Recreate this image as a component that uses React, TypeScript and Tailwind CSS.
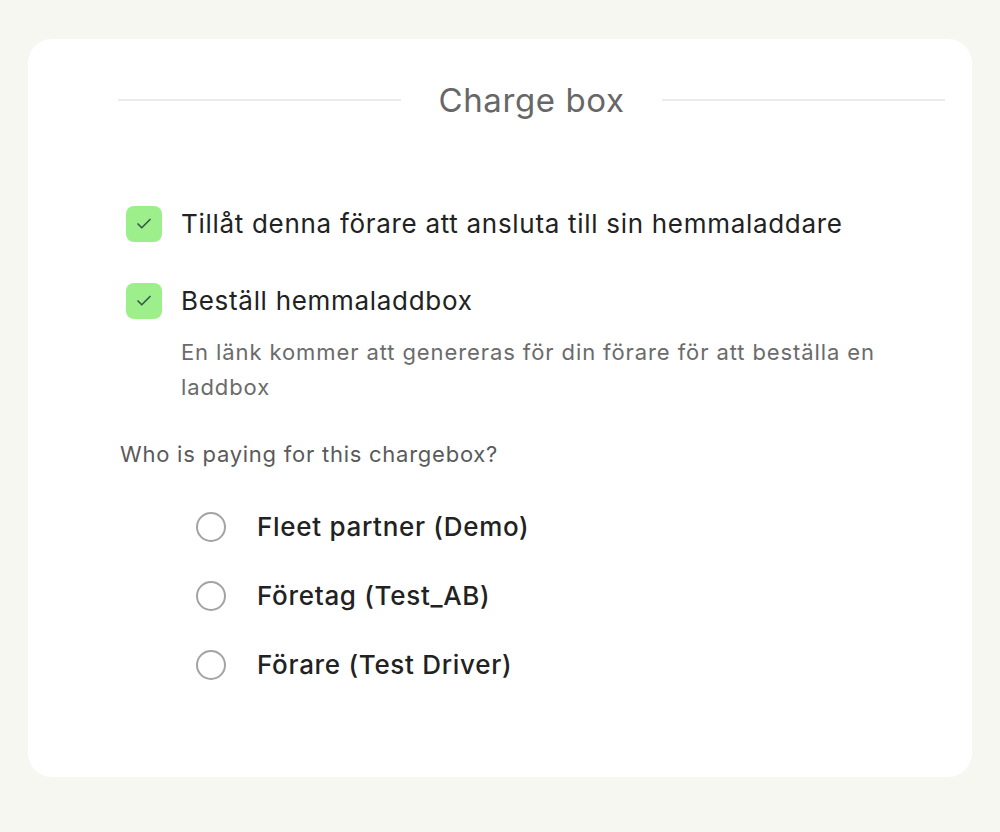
import { Check } from 'lucide-react';

const payers = ['Fleet partner (Demo)', 'Företag (Test_AB)', 'Förare (Test Driver)'];

function GreenCheck() {
  return (
    <div className="flex h-[36px] w-[36px] shrink-0 items-center justify-center rounded-[8px] bg-[#9cef8a]">
      <Check className="h-[18px] w-[18px] text-[#35584a]" strokeWidth={2.2} />
    </div>
  );
}

export default function App() {
  return (
    <div
      className="min-h-[832px] w-full bg-[#f7f7f2] pt-[39px] pl-[28px]"
      style={{ fontFamily: 'Inter, "Open Sans", sans-serif' }}
    >
      <div className="h-[738px] w-[944px] rounded-[24px] bg-white pl-[90px] pr-[27px]">
        {/* Title with divider lines */}
        <div className="flex items-center pt-[39px]">
          <div className="h-[2px] flex-1 bg-[#ebebeb]" />
          <h1 className="px-[37px] text-[33px] leading-[44px] tracking-[0.6px] text-[#676767]">Charge box</h1>
          <div className="h-[2px] flex-1 bg-[#ebebeb]" />
        </div>

        <div className="mt-[84px] flex items-center gap-[19px] pl-[8px]">
          <GreenCheck />
          <span className="text-[26px] leading-[36px] tracking-[0.7px] text-[#222]">
            Tillåt denna förare att ansluta till sin hemmaladdare
          </span>
        </div>

        <div className="mt-[41px] flex items-center gap-[19px] pl-[8px]">
          <GreenCheck />
          <span className="text-[26px] leading-[36px] tracking-[0.7px] text-[#222]">Beställ hemmaladdbox</span>
        </div>

        <p className="mt-[16px] pl-[63px] pr-[40px] text-[22px] leading-[35px] tracking-[0.9px] text-[#6b6b6b]">
          En länk kommer att genereras för din förare för att beställa en laddbox
        </p>

        <p className="mt-[34px] pl-[2px] text-[22px] leading-[30px] tracking-[0.75px] text-[#5a5a5a]">
          Who is paying for this chargebox?
        </p>

        <div className="mt-[40px] flex flex-col gap-[34px] pl-[78px]">
          {payers.map((p) => (
            <label key={p} className="flex items-center gap-[31px]">
              <span className="h-[30px] w-[30px] shrink-0 rounded-full border-2 border-[#a3a3a3]" />
              <span className="text-[26px] font-medium leading-[35px] tracking-[0.7px] text-[#222]">{p}</span>
            </label>
          ))}
        </div>
      </div>
    </div>
  );
}
